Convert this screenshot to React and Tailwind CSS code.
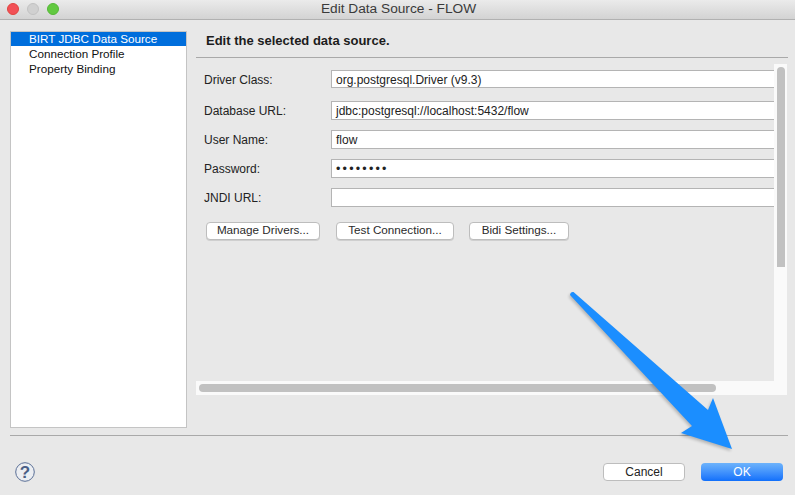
const fields = [
  { label: "Driver Class:", value: "org.postgresql.Driver (v9.3)", height: "h-[18px]", gap: "mb-[13px]", labelClass: "pt-[3px]", valueClass: "text-[12px] leading-[18px]" },
  { label: "Database URL:", value: "jdbc:postgresql://localhost:5432/flow", height: "h-[19px]", gap: "mb-[10px]", labelClass: "pt-[2px]", valueClass: "text-[12px] leading-[19px]" },
  { label: "User Name:", value: "flow", height: "h-[19px]", gap: "mb-[10px]", labelClass: "pt-[2px]", valueClass: "text-[12px] leading-[19px]" },
  { label: "Password:", value: "••••••••", height: "h-[19px]", gap: "mb-[10px]", labelClass: "pt-[2px]", valueClass: "text-[12.5px] leading-[19px] tracking-[2.2px]" },
  { label: "JNDI URL:", value: "", height: "h-[19px]", gap: "mb-[15px]", labelClass: "pt-[2px]", valueClass: "text-[12px] leading-[19px]" },
]

const navItems = ["BIRT JDBC Data Source", "Connection Profile", "Property Binding"]

function SmallButton({ children, className }) {
  return (
    <button className={`h-[18px] pb-[2px] bg-white border border-[#bdbdbd] rounded-[4px] text-[11.7px] leading-[14px] text-[#2a2a2a] shadow-[0_1px_0_#cfcfcf] ${className}`}>
      {children}
    </button>
  )
}

function Arrow() {
  const shape = "M570 295 Q570.500 291.500 573.500 292 L708 410 L713 398 L732 449 L681 433 L692 426 L570 295 Z"
  return (
    <svg className="absolute left-0 top-0 pointer-events-none" width="795" height="495" viewBox="0 0 795 495">
      <path d={shape} fill="#000" opacity="0.22" transform="translate(-1 2)" style={{ filter: "blur(1.5px)" }} />
      <path d={shape} fill="#1b8eff" />
    </svg>
  )
}

export default function App() {
  return (
    <div className="relative w-[795px] h-[495px] overflow-hidden flex flex-col bg-[#e8e8e8] text-[12px] text-[#1c1c1c]" style={{ fontFamily: '"Liberation Sans", Arial, sans-serif' }}>
      {/* TITLE BAR */}
      <div className="relative h-[20px] shrink-0 flex items-center justify-center bg-gradient-to-b from-[#ebebeb] to-[#d3d3d3] border-b border-[#b1b1b1]">
        <div className="absolute left-[7px] top-[3px] flex gap-[8px]">
          <span className="w-[12px] h-[12px] rounded-full bg-[#f25056] border border-[#e0443e]"></span>
          <span className="w-[12px] h-[12px] rounded-full bg-[#d0d0d0] border border-[#c2c2c2]"></span>
          <span className="w-[12px] h-[12px] rounded-full bg-[#62c940] border border-[#55b837]"></span>
        </div>
        <span className="ml-[2px] text-[13.7px] text-[#3a3a3a]">Edit Data Source - FLOW</span>
      </div>

      {/* BODY */}
      <div className="flex h-[408px] shrink-0 pt-[11px] pl-[10px]">
        <div className="w-[177px] h-[397px] shrink-0 bg-white border border-[#c4c4c4]">
          {navItems.map((item, index) => (
            <div key={item} className={`pl-[18px] text-[11.7px] ${index === 0 ? "h-[14px] leading-[14px] bg-[#006edc] text-white" : "h-[15px] leading-[16px] text-[#111]"}`}>
              {item}
            </div>
          ))}
        </div>

        <div className="w-[592px] ml-[9px] flex flex-col">
          <div className="h-[26px] pl-[10px] border-b border-[#a9a9a9] font-bold text-[13px] leading-[20px] box-content">
            Edit the selected data source.
          </div>

          {/* SCROLLED FORM */}
          <div className="mt-[6px] w-[591px] h-[331px] bg-[#fafafa] flex flex-col">
            <div className="flex h-[317px]">
              <div className="w-[578px] bg-[#e8e8e8] pt-[6px] overflow-hidden">
                {fields.map((field) => (
                  <div key={field.label} className={`flex items-center ${field.gap}`}>
                    <label className={`w-[135px] pl-[8px] text-[12px] leading-[15px] text-[#222] ${field.labelClass}`}>{field.label}</label>
                    <div className={`${field.height} flex-1 bg-white border-y border-l border-[#b4b4b4] pl-[4px] text-[#222] ${field.valueClass}`}>
                      {field.value}
                    </div>
                  </div>
                ))}
                <div className="flex pl-[10px]">
                  <SmallButton className="w-[114px]">Manage Drivers...</SmallButton>
                  <SmallButton className="w-[118px] ml-[16px]">Test Connection...</SmallButton>
                  <SmallButton className="w-[100px] ml-[15px]">Bidi Settings...</SmallButton>
                </div>
              </div>
              <div className="flex-1 pt-[3px] pl-[3px]">
                <div className="w-[8px] h-[200px] bg-[#c1c1c1] rounded-t-[4px]"></div>
              </div>
            </div>
            <div className="pt-[3px] pl-[3px]">
              <div className="w-[517px] h-[8px] bg-[#c1c1c1] rounded-full"></div>
            </div>
          </div>
        </div>
      </div>

      {/* FOOTER */}
      <div className="ml-[10px] w-[778px] mt-[7px] border-t border-[#a9a9a9] flex items-center justify-between h-[60px] shrink-0">
        <svg className="ml-[5px] mt-[13px]" width="20" height="20" viewBox="0 0 20 20">
          <circle cx="10" cy="10" r="9.300" fill="#eceef2" stroke="#5a6f96" strokeWidth="1" />
          <text x="10" y="16" textAnchor="middle" fontSize="17" fontWeight="700" fill="#4a5f86" fontFamily="Liberation Sans">?</text>
        </svg>
        <div className="flex gap-[16px] mt-[13px] mr-[5px]">
          <button className="w-[82px] h-[18px] bg-white border border-[#bdbdbd] rounded-[4px] text-[12px] leading-[16px] text-[#222]">Cancel</button>
          <button className="w-[82px] h-[18px] bg-gradient-to-b from-[#6db3fb] to-[#0f6ffb] rounded-[4px] text-[12px] leading-[18px] text-white">OK</button>
        </div>
      </div>

      <Arrow />
    </div>
  )
}
